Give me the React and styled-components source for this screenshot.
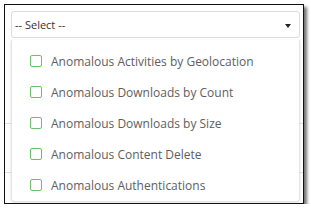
import React from "react";
import styled, { createGlobalStyle } from "styled-components";

// Estilos globales de la página
const GlobalStyle = createGlobalStyle`
  html, body {
    margin: 0;
    padding: 0;
    background: #ffffff;
  }
  body {
    font-family: "Open Sans", "Liberation Sans", sans-serif;
  }
`;

// Marco de la captura con sombra
const Frame = styled.div`
  margin: 4px 0 0 4px;
  width: 298px;
  height: 198px;
  border: 1px solid #111111;
  box-shadow: 3px 3px 3px rgba(0, 0, 0, 0.55);
  background: #ffffff;
  overflow: hidden;
  box-sizing: content-box;
`;

const Body = styled.div`
  position: relative;
  padding: 6px 3px 0 6px;
`;

// Campo select cerrado
const SelectBox = styled.div`
  height: 25px;
  border: 1px solid #dcdcdc;
  border-radius: 3px;
  display: flex;
  align-items: center;
  justify-content: space-between;
  padding: 0 8px 0 3px;
  font-size: 11px;
  color: #333333;
`;

const Caret = styled.span`
  width: 0;
  height: 0;
  border-left: 3.5px solid transparent;
  border-right: 3.5px solid transparent;
  border-top: 4px solid #222222;
  margin-top: 3px;
`;

// Filas del formulario que quedan por debajo del menú
const BackgroundRow = styled.div`
  height: ${(p) => p.$h}px;
  border-bottom: 1px solid #e2e2e2;
  margin: 0 -3px 0 -6px;
`;

// Menú desplegable
const Menu = styled.div`
  position: absolute;
  top: 35px;
  left: 6px;
  right: 3px;
  background: #ffffff;
  border: 1px solid #e4e4e4;
  border-top: none;
  border-radius: 0 0 4px 4px;
  box-shadow: 0 1px 3px rgba(0, 0, 0, 0.12);
  padding: 6px 0 0 18px;
`;

const Option = styled.label`
  height: 31px;
  display: flex;
  align-items: center;
  gap: 9px;
  font-size: 12px;
  color: #5e5e5e;
`;

const Box = styled.span`
  width: 10px;
  height: 10px;
  border: 1px solid #6cc06c;
  border-radius: 2px;
  flex-shrink: 0;
  margin-top: -1px;
`;

const options = [
  "Anomalous Activities by Geolocation",
  "Anomalous Downloads by Count",
  "Anomalous Downloads by Size",
  "Anomalous Content Delete",
  "Anomalous Authentications",
];

const App = () => (
  <>
    <GlobalStyle />
    <Frame>
      <Body>
        <SelectBox>
          <span>-- Select --</span>
          <Caret />
        </SelectBox>
        <BackgroundRow $h={85} />
        <BackgroundRow $h={48} />
        <Menu>
          {options.map((o) => (
            <Option key={o}>
              <Box />
              {o}
            </Option>
          ))}
        </Menu>
      </Body>
    </Frame>
  </>
);

export default App;
